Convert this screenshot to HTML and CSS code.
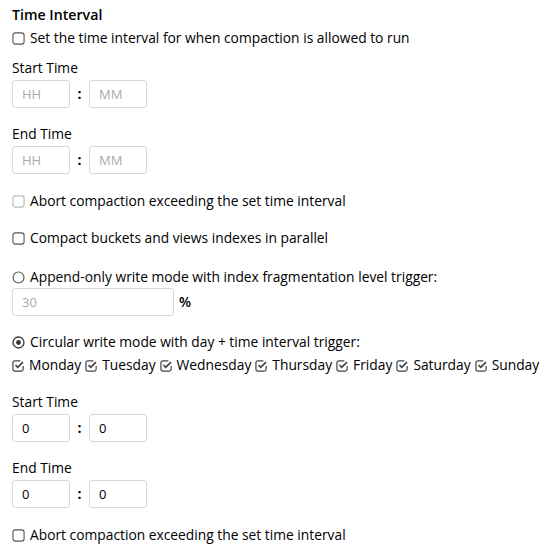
FILE: index.html
```html
<!DOCTYPE html>
<html>
<head>
<meta charset="utf-8">
<link rel="stylesheet" href="styles.css">
</head>
<body>
<div class="panel">
  <h4 class="title">Time Interval</h4>
  <label class="opt">
    <svg class="ico" viewBox="0 0 14 14"><rect x="1" y="1" width="12" height="12" rx="2.5" fill="none" stroke="#555" stroke-width="1.2"/></svg>
    Set the time interval for when compaction is allowed to run
  </label>

  <div class="lbl lbl-first">Start Time</div>
  <div class="time">
    <input class="tin" placeholder="HH"><span class="colon">:</span><input class="tin" placeholder="MM">
  </div>
  <div class="lbl">End Time</div>
  <div class="time">
    <input class="tin" placeholder="HH"><span class="colon">:</span><input class="tin" placeholder="MM">
  </div>

  <label class="opt gap disabled">
    <svg class="ico" viewBox="0 0 14 14"><rect x="1" y="1" width="12" height="12" rx="2.5" fill="none" stroke="#bbb" stroke-width="1.2"/></svg>
    Abort compaction exceeding the set time interval
  </label>
  <label class="opt gap">
    <svg class="ico" viewBox="0 0 14 14"><rect x="1" y="1" width="12" height="12" rx="2.5" fill="none" stroke="#555" stroke-width="1.2"/></svg>
    Compact buckets and views indexes in parallel
  </label>

  <label class="opt gap2">
    <svg class="ico" viewBox="0 0 14 14"><circle cx="7" cy="7" r="5.9" fill="none" stroke="#555" stroke-width="1.2"/></svg>
    Append-only write mode with index fragmentation level trigger:
  </label>
  <div class="pct">
    <input class="pin" placeholder="30"><span class="pctsign">%</span>
  </div>

  <label class="opt gap3">
    <svg class="ico" viewBox="0 0 14 14"><circle cx="7" cy="7" r="5.9" fill="none" stroke="#333" stroke-width="1.4"/><circle cx="7" cy="7" r="2.6" fill="#333"/></svg>
    Circular write mode with day + time interval trigger:
  </label>
  <div class="days">
    <span class="day"><svg class="ico" viewBox="0 0 14 14"><path d="M12 7.5v3.5a2 2 0 0 1-2 2H3a2 2 0 0 1-2-2V4a2 2 0 0 1 2-2h6" fill="none" stroke="#444" stroke-width="1.3"/><path d="M3.8 6.6l2.4 2.4 5.6-5.6" fill="none" stroke="#444" stroke-width="1.9"/></svg>Monday</span>
    <span class="day"><svg class="ico" viewBox="0 0 14 14"><path d="M12 7.5v3.5a2 2 0 0 1-2 2H3a2 2 0 0 1-2-2V4a2 2 0 0 1 2-2h6" fill="none" stroke="#444" stroke-width="1.3"/><path d="M3.8 6.6l2.4 2.4 5.6-5.6" fill="none" stroke="#444" stroke-width="1.9"/></svg>Tuesday</span>
    <span class="day"><svg class="ico" viewBox="0 0 14 14"><path d="M12 7.5v3.5a2 2 0 0 1-2 2H3a2 2 0 0 1-2-2V4a2 2 0 0 1 2-2h6" fill="none" stroke="#444" stroke-width="1.3"/><path d="M3.8 6.6l2.4 2.4 5.6-5.6" fill="none" stroke="#444" stroke-width="1.9"/></svg>Wednesday</span>
    <span class="day"><svg class="ico" viewBox="0 0 14 14"><path d="M12 7.5v3.5a2 2 0 0 1-2 2H3a2 2 0 0 1-2-2V4a2 2 0 0 1 2-2h6" fill="none" stroke="#444" stroke-width="1.3"/><path d="M3.8 6.6l2.4 2.4 5.6-5.6" fill="none" stroke="#444" stroke-width="1.9"/></svg>Thursday</span>
    <span class="day"><svg class="ico" viewBox="0 0 14 14"><path d="M12 7.5v3.5a2 2 0 0 1-2 2H3a2 2 0 0 1-2-2V4a2 2 0 0 1 2-2h6" fill="none" stroke="#444" stroke-width="1.3"/><path d="M3.8 6.6l2.4 2.4 5.6-5.6" fill="none" stroke="#444" stroke-width="1.9"/></svg>Friday</span>
    <span class="day"><svg class="ico" viewBox="0 0 14 14"><path d="M12 7.5v3.5a2 2 0 0 1-2 2H3a2 2 0 0 1-2-2V4a2 2 0 0 1 2-2h6" fill="none" stroke="#444" stroke-width="1.3"/><path d="M3.8 6.6l2.4 2.4 5.6-5.6" fill="none" stroke="#444" stroke-width="1.9"/></svg>Saturday</span>
    <span class="day"><svg class="ico" viewBox="0 0 14 14"><path d="M12 7.5v3.5a2 2 0 0 1-2 2H3a2 2 0 0 1-2-2V4a2 2 0 0 1 2-2h6" fill="none" stroke="#444" stroke-width="1.3"/><path d="M3.8 6.6l2.4 2.4 5.6-5.6" fill="none" stroke="#444" stroke-width="1.9"/></svg>Sunday</span>
  </div>

  <div class="lbl lbl-after-days">Start Time</div>
  <div class="time">
    <input class="tin val" value="0"><span class="colon">:</span><input class="tin val" value="0">
  </div>
  <div class="lbl">End Time</div>
  <div class="time">
    <input class="tin val" value="0"><span class="colon">:</span><input class="tin val" value="0">
  </div>

  <label class="opt gap-last">
    <svg class="ico" viewBox="0 0 14 14"><rect x="1" y="1" width="12" height="12" rx="2.5" fill="none" stroke="#555" stroke-width="1.2"/></svg>
    Abort compaction exceeding the set time interval
  </label>
</div>
</body>
</html>
```
FILE: styles.css
```css
html, body {
  margin: 0;
  padding: 0;
  background: #fff;
}
body {
  font-family: "Open Sans", "Liberation Sans", sans-serif;
  font-size: 13.8px;
  line-height: 20px;
  color: #000;
}
.panel {
  display: flex;
  flex-direction: column;
  align-items: flex-start;
  padding: 5px 12px 0 12px;
}
.title {
  margin: 0;
  font-size: 14.2px;
  font-weight: 600;
  line-height: 20px;
}
.opt {
  display: flex;
  align-items: center;
  gap: 5px;
  margin-top: 3px;
  white-space: nowrap;
}
.ico {
  width: 13px;
  height: 13px;
  flex: none;
}
.opt.gap { margin-top: 17px; }
.opt.gap2 { margin-top: 19px; }
.opt.gap3 { margin-top: 16px; }
.opt.gap-last { margin-top: 17px; }
.lbl {
  margin-top: 16px;
}
.lbl-first { margin-top: 10px; }
.lbl-after-days { margin-top: 17px; }
.time {
  display: flex;
  align-items: center;
  margin-top: 2px;
}
.tin, .pin {
  box-sizing: border-box;
  height: 28px;
  border: 1px solid #d9d9d9;
  border-radius: 3px;
  padding: 0 9px;
  font-family: "Open Sans", "Liberation Sans", sans-serif;
  font-size: 13px;
  color: #000;
  background: #fff;
  outline: none;
}
.tin { width: 58px; }
.tin::placeholder, .pin::placeholder { color: #aaa; }
.colon {
  width: 19px;
  text-align: center;
  font-weight: 700;
  font-size: 14px;
}
.pct {
  display: flex;
  align-items: center;
  margin-top: 1px;
}
.pin { width: 162px; }
.pctsign {
  margin-left: 5px;
  font-weight: 600;
  font-size: 14px;
  letter-spacing: -1px;
}
.days {
  display: flex;
  gap: 4px;
  margin-top: 3px;
  white-space: nowrap;
}
.day {
  display: flex;
  align-items: center;
  gap: 4px;
}
```
